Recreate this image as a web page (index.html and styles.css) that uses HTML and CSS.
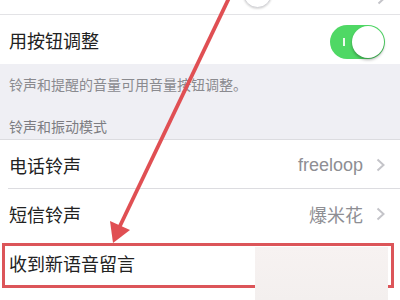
FILE: index.html
```html
<!DOCTYPE html>
<html>
<head>
<meta charset="utf-8">
<link rel="stylesheet" href="styles.css">
</head>
<body>
<div class="screen">
  <div class="row top">
    <span class="knob-top"></span>
    <svg class="chev chev-top" viewBox="0 0 9 14" width="9" height="14"><path d="M1.5 1.5 L7.5 7 L1.5 12.5" fill="none" stroke="#c4c4c9" stroke-width="2"/></svg>
  </div>
  <div class="row">
    <span class="label">用按钮调整</span>
    <span class="toggle"><span class="toggle-i"></span><span class="toggle-knob"></span></span>
  </div>
  <div class="group">
    <div class="footer-text">铃声和提醒的音量可用音量按钮调整。</div>
    <div class="header-text">铃声和振动模式</div>
  </div>
  <div class="row sep">
    <span class="label">电话铃声</span>
    <span class="value latin">freeloop</span>
    <svg class="chev" viewBox="0 0 9 14" width="9" height="14"><path d="M1.5 1.5 L7.5 7 L1.5 12.5" fill="none" stroke="#c4c4c9" stroke-width="2"/></svg>
  </div>
  <div class="row">
    <span class="label">短信铃声</span>
    <span class="value">爆米花</span>
    <svg class="chev" viewBox="0 0 9 14" width="9" height="14"><path d="M1.5 1.5 L7.5 7 L1.5 12.5" fill="none" stroke="#c4c4c9" stroke-width="2"/></svg>
  </div>
  <div class="row">
    <span class="label">收到新语音留言</span>
  </div>

  <svg class="arrow" viewBox="0 0 400 300" width="400" height="300">
    <line x1="229" y1="-2" x2="119" y2="228" stroke="#e04f53" stroke-width="3.8"/>
    <polygon points="113,243 110,221 130,230" fill="#e04f53"/>
  </svg>
  <div class="redbox"></div>
  <div class="watermark"></div>
</div>
</body>
</html>
```

FILE: styles.css
```css
html, body {
  margin: 0;
  padding: 0;
  background: #ffffff;
}
.screen {
  position: relative;
  width: 400px;
  height: 300px;
  overflow: hidden;
  background: #ffffff;
  font-family: "Noto Sans CJK SC", "Liberation Sans", sans-serif;
}
.row {
  display: flex;
  align-items: center;
  height: 49px;
  padding: 0 15px 0 9px;
  box-sizing: border-box;
  background: #ffffff;
  position: relative;
}
.row.top {
  height: 15px;
  border-bottom: 1px solid #e3e3e6;
  overflow: hidden;
  align-items: flex-start;
}
.knob-top {
  display: block;
  width: 27px;
  height: 27px;
  border-radius: 50%;
  background: #fff;
  border: 1px solid #d2d2d6;
  box-shadow: 0 1px 2px rgba(0,0,0,0.15);
  margin-left: 234px;
  margin-top: -21px;
}
.chev-top {
  margin-left: auto;
  margin-top: -9px;
  margin-right: -1px;
}
.label {
  font-size: 18px;
  color: #222222;
  line-height: 1;
}
.value {
  margin-left: auto;
  font-size: 18px;
  color: #8e8e93;
  line-height: 1;
  margin-right: 13px;
}
.latin {
  font-family: "Liberation Sans", Arial, sans-serif;
}
.chev {
  display: block;
}
.row.sep::after {
  content: "";
  position: absolute;
  left: 8px;
  right: 0;
  bottom: 0;
  height: 1px;
  background: #dcdce0;
}
.toggle {
  margin-left: auto;
  position: relative;
  display: block;
  width: 55px;
  height: 34px;
  border-radius: 17px;
  background: #4fd865;
  margin-top: 4px;
}
.toggle-i {
  position: absolute;
  left: 13px;
  top: 13px;
  width: 1.5px;
  height: 8px;
  background: #ffffff;
  opacity: 0.9;
}
.toggle-knob {
  position: absolute;
  right: 1px;
  top: 1px;
  width: 32px;
  height: 32px;
  border-radius: 50%;
  background: #ffffff;
  box-shadow: 0 2px 3px rgba(0,0,0,0.3);
}
.group {
  height: 76px;
  background: #efeff4;
  border-bottom: 1px solid #dcdce0;
  box-sizing: border-box;
  padding: 12px 0 0 9px;
  display: flex;
  flex-direction: column;
}
.footer-text {
  font-size: 14px;
  line-height: 16px;
  color: #8a8a8f;
  white-space: nowrap;
}
.header-text {
  font-size: 14px;
  line-height: 16px;
  color: #7d7d82;
  margin-top: 26px;
}
.arrow {
  position: absolute;
  left: 0;
  top: 0;
}
.redbox {
  position: absolute;
  left: 2px;
  top: 243px;
  width: 392px;
  height: 45px;
  box-sizing: border-box;
  border: 3px solid #dc5559;
}
.watermark {
  position: absolute;
  left: 255px;
  top: 247px;
  width: 133px;
  height: 53px;
  background: linear-gradient(180deg, #f7f2f1, #f3efee);
}
```
